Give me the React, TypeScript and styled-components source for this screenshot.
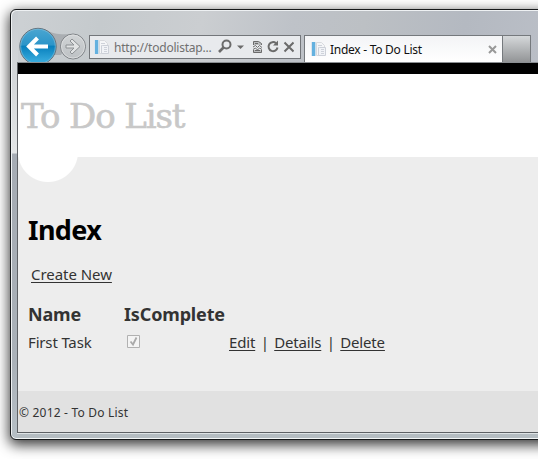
import React from "react";
import styled, { createGlobalStyle } from "styled-components";

const GlobalStyle = createGlobalStyle`
  * { box-sizing: border-box; }
  html, body { margin: 0; background: #fff; overflow: hidden; }
  body { font-family: "Noto Sans", "Open Sans", sans-serif; color: #333; }
`;

const Desktop = styled.div`
  width: 538px;
  height: 459px;
  padding: 9px 0 0 10px;
  overflow: hidden;
`;

const BrowserWindow = styled.div`
  width: 560px;
  height: 431px;
  border: 1px solid #17191b;
  border-radius: 6px;
  padding: 0 0 0 6px;
  background:
    linear-gradient(#c9cdd1 0, #d6d9db 80px, #e3e5e6 143px, #a5abb3 144px, #aab1b8 350px, #b6bfc5 100%) 0 0 / 7px 100% no-repeat,
    linear-gradient(100deg, #cdd1d4 0, #c5cacd 90px, #cbced1 190px, #bec2c8 280px, #bcc0c4 350px, #b4b9c1 450px, #bcc0c8 100%) 0 0 / 100% 60px no-repeat,
    #b5bdc2;
  box-shadow: inset 1px 1px 0 #eef1f3, inset 0 -1px 0 #f3f6f7, 0 4px 13px 1px rgba(0, 0, 0, 0.78);
`;

const Chrome = styled.header`
  display: flex;
  align-items: flex-start;
  height: 52px;
  padding-top: 16px;
`;

const NavButtons = styled.svg`
  display: block;
  flex: none;
  width: 72px;
  height: 36px;
`;

const AddressBar = styled.div`
  display: flex;
  align-items: center;
  flex: none;
  width: 212px;
  height: 24px;
  margin-top: 9px;
  padding-left: 4px;
  border: 1px solid #73767a;
  background: #e8eaed;
`;

const Address = styled.span`
  flex: none;
  width: 99px;
  margin-left: 4px;
  padding-top: 1px;
  font-size: 12px;
  line-height: 20px;
  letter-spacing: -0.22px;
  white-space: nowrap;
  color: #707070;
`;

const ToolIcons = styled.svg`
  flex: none;
  width: 82px;
  height: 20px;
  margin-left: -1px;
`;

const Tab = styled.div`
  display: flex;
  align-items: center;
  flex: none;
  width: 199px;
  height: 27px;
  margin: 9px 0 0 3px;
  padding-left: 6px;
  border: solid #75797d;
  border-width: 1px 1px 0 1px;
  background: linear-gradient(#f3f4f6, #fff);
`;

const TabTitle = styled.span`
  flex: 1;
  margin-left: 3px;
  font-size: 12px;
  letter-spacing: -0.27px;
  color: #111;
  white-space: nowrap;
`;

const CloseIcon = styled.svg`
  width: 9px;
  height: 9px;
  margin-right: 5px;
`;

const NewTab = styled.div`
  flex: none;
  width: 28px;
  height: 27px;
  margin-top: 9px;
  border: solid #75797d;
  border-width: 1px 1px 0 0;
  background: linear-gradient(#d5d8da, #929496);
`;

const Viewport = styled.main`
  height: 371px;
  border: 1px solid #5d6064;
  border-top-color: #8b8f93;
  box-shadow: 0 1px 0 #dfe4e6;
  background: #ededed;
`;

const PageHeader = styled.div`
  height: 94px;
  padding: 22px 0 0 3px;
  border-top: 11px solid #000;
  background: #fff;
`;

const SiteTitle = styled.div`
  font-family: "DejaVu Serif", serif;
  font-size: 34px;
  line-height: 40px;
  letter-spacing: -1.1px;
  white-space: nowrap;
  color: #c8c8c8;
  -webkit-text-stroke: 0.6px #c8c8c8;
`;

const Notch = styled.div`
  width: 60px;
  height: 25px;
  background: radial-gradient(circle at 30px -5px, #fff 29.5px, transparent 30.5px);
`;

const Content = styled.section`
  height: 209px;
  padding: 26px 0 0 10px;
`;

const Heading = styled.h1`
  margin: 0;
  font-size: 27px;
  line-height: 44px;
  letter-spacing: -0.6px;
  color: #000;
`;

const Link = styled.a`
  color: #333;
  text-decoration: underline;
  text-underline-offset: 2px;
  text-decoration-thickness: 1px;
`;

const CreateRow = styled.p`
  margin: 10px 0 0 3px;
  font-size: 15px;
  line-height: 24px;
  letter-spacing: -0.05px;
`;

const Table = styled.div`
  display: grid;
  grid-template-columns: 96px 105px auto;
  grid-template-rows: 28px 28px;
  align-items: center;
  margin-top: 14px;
  font-size: 15px;
`;

const ColumnName = styled.div<{ $span?: boolean }>`
  grid-column: ${(p) => (p.$span ? "2 / 4" : "auto")};
  font-size: 18px;
  font-weight: 700;
  letter-spacing: -0.15px;
`;

const Cell = styled.div`
  display: flex;
  align-items: center;
  white-space: nowrap;
  letter-spacing: -0.16px;
`;

const Checkbox = styled.svg`
  width: 13px;
  height: 13px;
  margin: 0 0 1px 3px;
`;

const Divider = styled.span`
  width: 19px;
  text-align: center;
`;

const Footer = styled.footer`
  height: 41px;
  padding: 13px 0 0 1px;
  background: #e1e1e1;
  font-size: 12px;
  line-height: 18px;
  letter-spacing: 0.2px;
`;

const PageGlyph = styled.svg`
  flex: none;
  width: 16px;
  height: 16px;
`;

const PageIcon = () => (
  <PageGlyph viewBox="0 0 16 16">
    <path d="M5.5 1.5h5l3 3v10h-8z" fill="#f5f6f8" stroke="#d8dade" />
    <path d="M8.5 6.5h6v8h-7v-8z" fill="#f1f3f7" stroke="#ccd0d8" />
    <path d="M10 8.5h3M10 10.5h3M10 12.5h3M7 4.5h4" stroke="#ced2da" />
    <path d="M.5 1v14" stroke="#dce6ef" />
    <path d="M1 1h3v14H1z" fill="#64b1df" />
    <path d="M4.5 1v14" stroke="#c9deed" />
  </PageGlyph>
);

const Navigation = () => (
  <NavButtons viewBox="0 0 72 36">
    <defs>
      <linearGradient id="back" x1="0" y1="0" x2="0" y2="1">
        <stop offset="0" stopColor="#4ba6d1" />
        <stop offset=".45" stopColor="#2c95c9" />
        <stop offset=".5" stopColor="#0880bd" />
        <stop offset="1" stopColor="#42b4e4" />
      </linearGradient>
      <linearGradient id="forward" x1="0" y1="0" x2="0" y2="1">
        <stop offset="0" stopColor="#d1d4d6" />
        <stop offset="1" stopColor="#bdc1c4" />
      </linearGradient>
    </defs>
    <path d="M27 3C37 8 42 9 56 8L44 29H31z" fill="#aaaeb2" />
    <circle cx="21" cy="20.5" r="18.2" fill="url(#back)" stroke="#67727b" />
    <circle cx="21" cy="20.5" r="17.3" fill="none" stroke="#7cbbd8" strokeWidth=".7" />
    <path d="M31 20.5H13M20.5 12l-8.5 8.5 8.5 8.5" fill="none" stroke="#fff" strokeWidth="4" />
    <circle cx="56" cy="20.5" r="12.5" fill="url(#forward)" stroke="#7d8185" />
    <circle cx="56" cy="20.5" r="11.5" fill="none" stroke="#dfe1e2" strokeWidth=".8" />
    <path d="M49 19h8l-4-4 2-2 8 7.5-8 7.5-2-2 4-4h-8z" fill="#e1e3e4" stroke="#8d9194" />
  </NavButtons>
);

const AddressTools = () => (
  <ToolIcons viewBox="0 0 82 20" fill="none" stroke="#6b6b6b">
    <circle cx="14.5" cy="7.5" r="4" strokeWidth="2" />
    <path d="M11.5 10.5L7 15" strokeWidth="2.6" />
    <path d="M25 8.5h7L28.5 12z" fill="#6b6b6b" stroke="none" />
    <path d="M41.5 8V4.5h5l3 2V8M41.5 13v2.500h8V13" fill="#b9bbbd" />
    <path d="M43 6.500h3M43 13.500h5" />
    <path d="M41 10l2.500-1.500 2 2 2-2 2.500 2M41 12.500l2.500-1.500 2 2 2-2 2.500 1.500" />
    <path d="M64 6.200A4.500 4.500 0 1 0 65.500 10.500" strokeWidth="2" />
    <path d="M61 8.500h5V3.500z" fill="#6b6b6b" stroke="none" />
    <path d="M72.500 5.500l9 9M81.500 5.500l-9 9" strokeWidth="2" />
  </ToolIcons>
);

export default function App() {
  return (
    <>
      <GlobalStyle />
      <Desktop>
        <BrowserWindow>
          <Chrome>
            <Navigation />
            <AddressBar>
              <PageIcon />
              <Address>http://todolistap...</Address>
              <AddressTools />
            </AddressBar>
            <Tab>
              <PageIcon />
              <TabTitle>Index - To Do List</TabTitle>
              <CloseIcon viewBox="0 0 9 9">
                <path d="M1 1l7 7M8 1l-7 7" stroke="#999" strokeWidth="2" />
              </CloseIcon>
            </Tab>
            <NewTab />
          </Chrome>
          <Viewport>
            <PageHeader>
              <SiteTitle>To Do List</SiteTitle>
            </PageHeader>
            <Notch />
            <Content>
              <Heading>Index</Heading>
              <CreateRow>
                <Link>Create New</Link>
              </CreateRow>
              <Table>
                <ColumnName>Name</ColumnName>
                <ColumnName $span>IsComplete</ColumnName>
                <Cell>First Task</Cell>
                <Cell>
                  <Checkbox viewBox="0 0 13 13">
                    <path d="M.5.5h12v12H.5z" fill="#f4f4f4" stroke="#b1b1b1" />
                    <path d="M3.5 6.5L6 9.5 9.5 2.5" fill="none" stroke="#aaa" strokeWidth="1.8" />
                  </Checkbox>
                </Cell>
                <Cell>
                  <Link>Edit</Link>
                  <Divider>|</Divider>
                  <Link>Details</Link>
                  <Divider>|</Divider>
                  <Link>Delete</Link>
                </Cell>
              </Table>
            </Content>
            <Footer>© 2012 - To Do List</Footer>
          </Viewport>
        </BrowserWindow>
      </Desktop>
    </>
  );
}
